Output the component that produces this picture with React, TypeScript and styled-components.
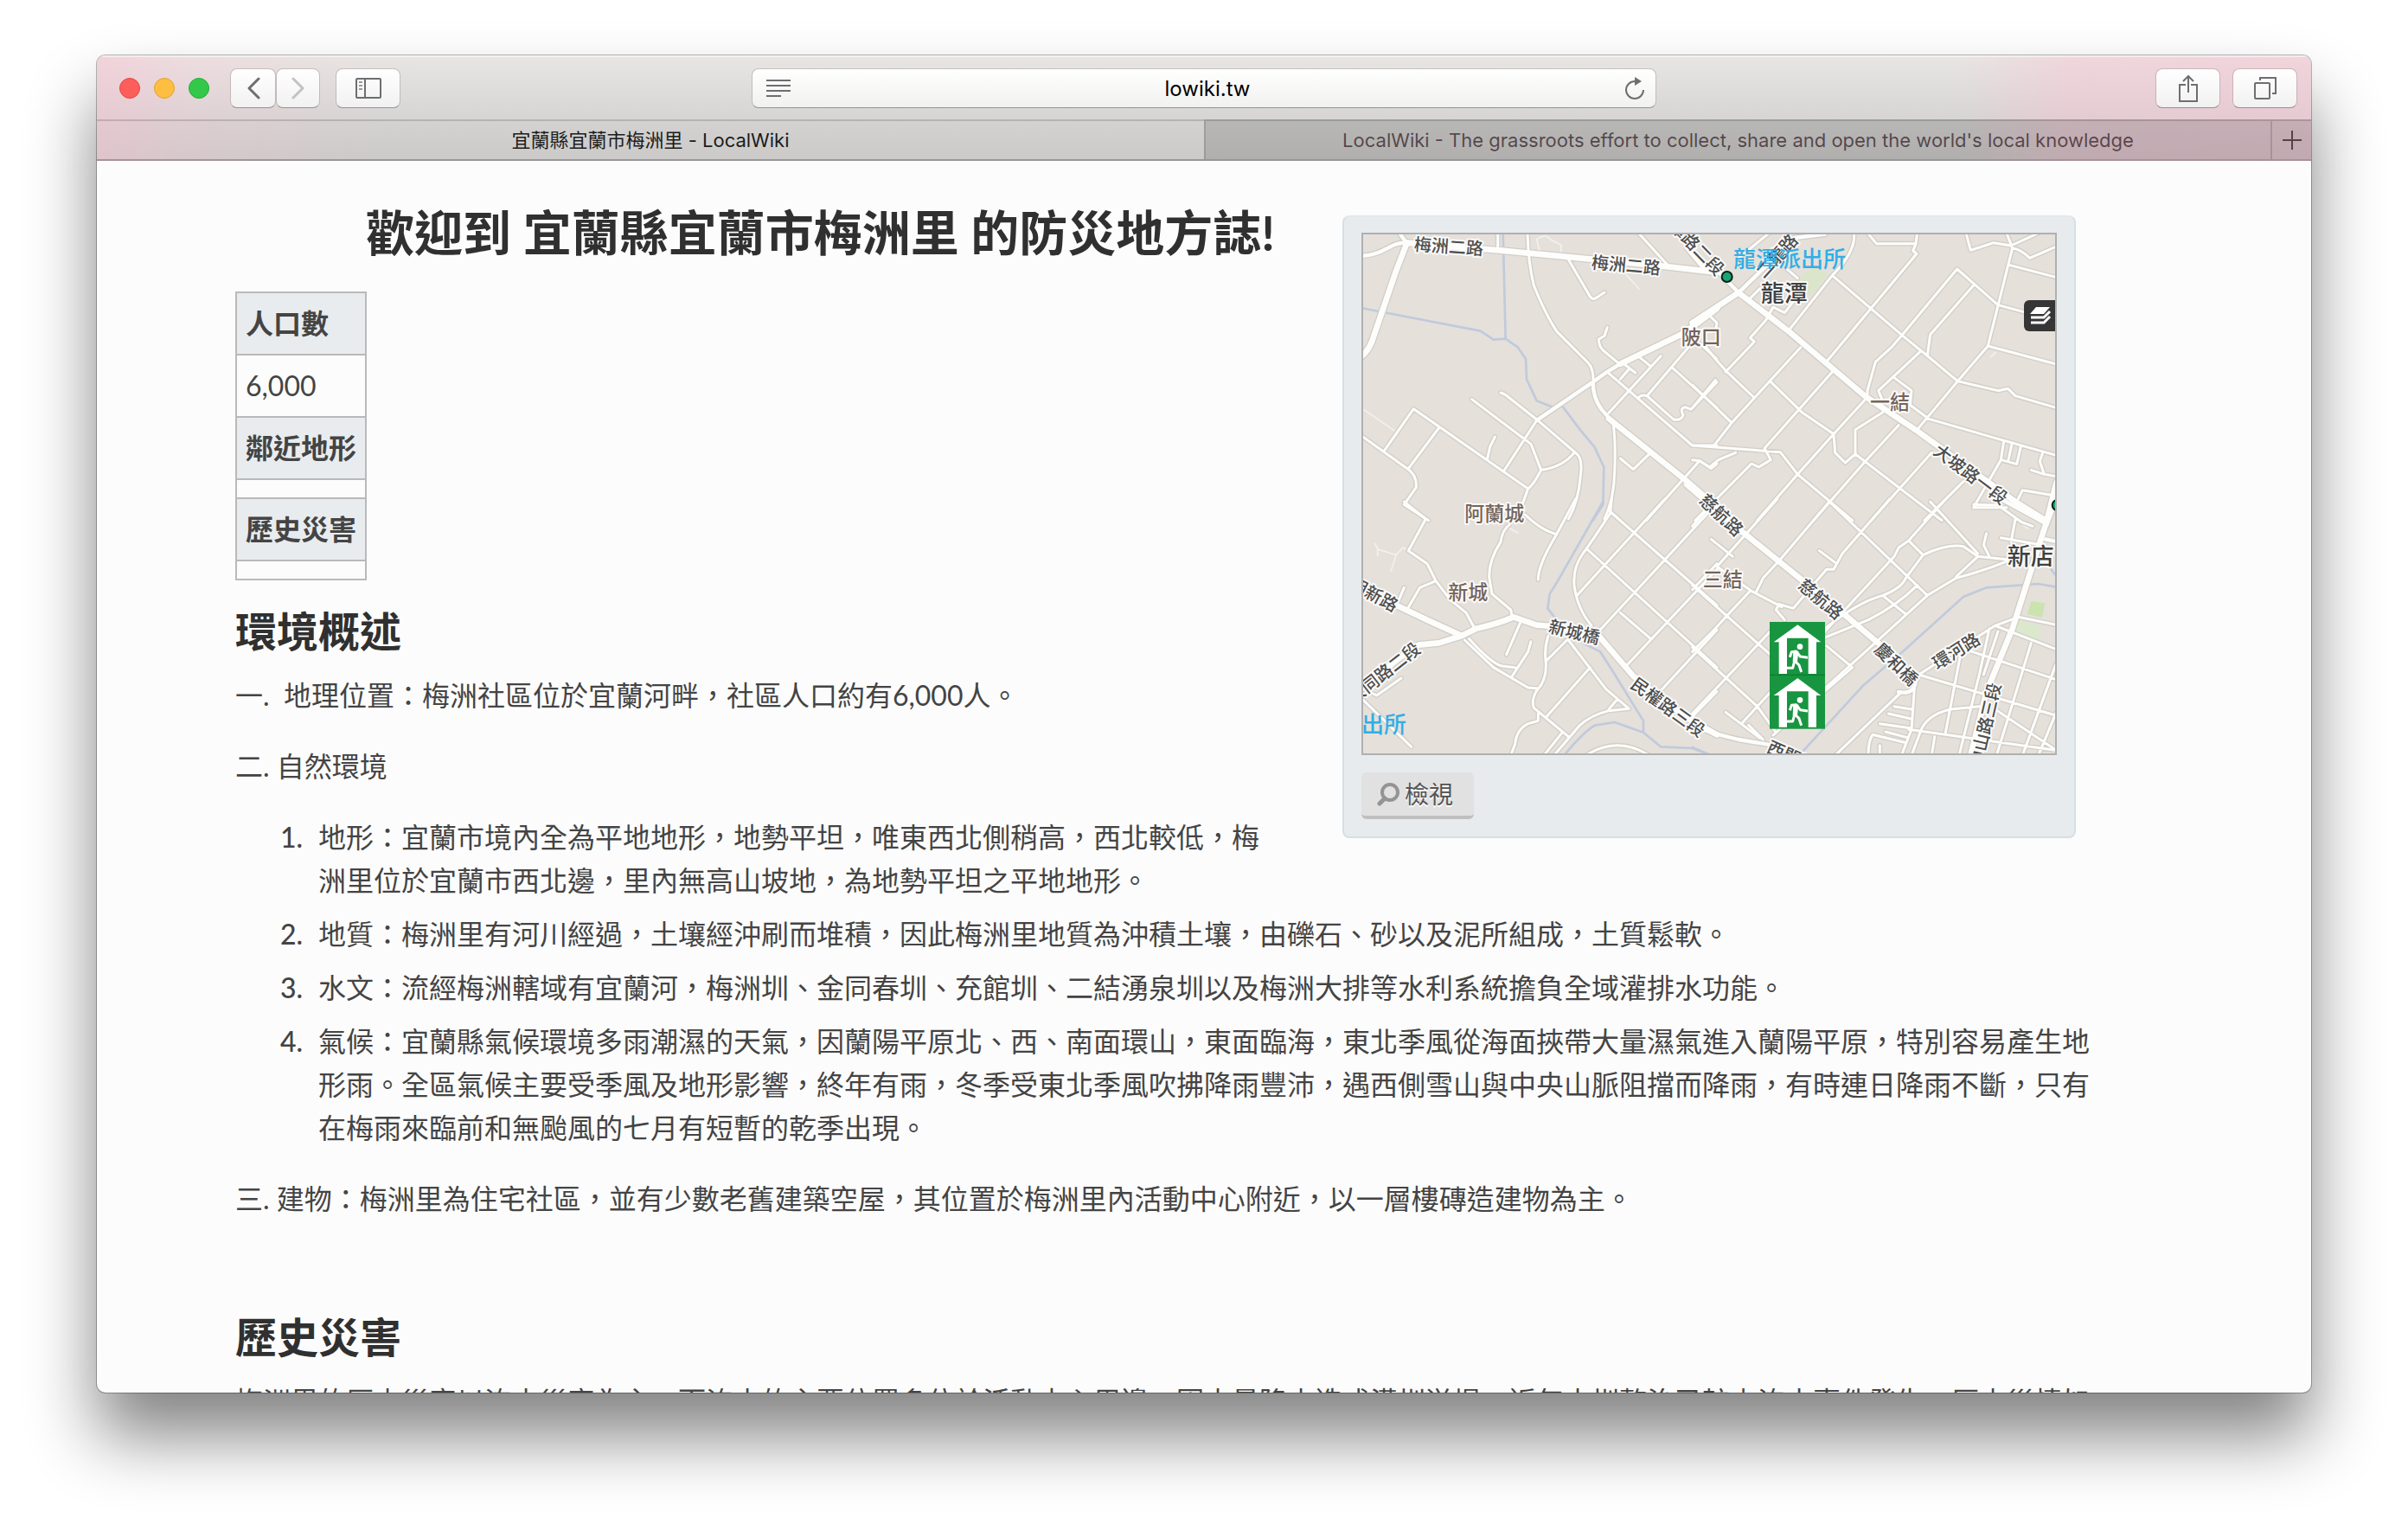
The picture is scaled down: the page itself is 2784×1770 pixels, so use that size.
import React from "react";
import styled, { createGlobalStyle } from "styled-components";

const UI_FONT = `Inter, "Noto Sans CJK TC", sans-serif`;
const TEXT_FONT = `Lato, "Noto Sans CJK TC", sans-serif`;

const GlobalStyle = createGlobalStyle`
  *, *::before, *::after { box-sizing: border-box; }
  body { margin: 0; background: #fff; font-family: ${TEXT_FONT}; }
  button, input { font: inherit; color: inherit; }
`;

/* ---------- browser window ---------- */

const Desktop = styled.div`
  height: 100vh;
  padding: 64px 112px 160px;
`;

const BrowserWindow = styled.div`
  display: flex;
  flex-direction: column;
  height: 100%;
  overflow: hidden;
  border-radius: 10px;
  background: #fcfcfc;
  box-shadow: 0 0 0 1px rgba(0, 0, 0, 0.28), 0 50px 80px rgba(0, 0, 0, 0.49);
`;

const Chrome = styled.header`
  flex: none;
  font-family: ${UI_FONT};
  background:
    linear-gradient(100deg, rgba(255, 185, 205, 0.42) 0, rgba(255, 190, 210, 0.22) 110px, rgba(255, 190, 210, 0) 360px),
    linear-gradient(90deg, rgba(255, 185, 208, 0) 84%, rgba(255, 185, 208, 0.34) 89%, rgba(255, 185, 208, 0.4) 100%),
    linear-gradient(180deg, #e8e6e4 0, #d6d5d4 74px, #d3d2d1 76px, #cbcac9 100%);
`;

const Toolbar = styled.div`
  display: grid;
  grid-template-columns: 1fr minmax(300px, 1046px) 1fr;
  align-items: center;
  height: 74px;
  padding: 0 16px;
  column-gap: 12px;
  border-top: 2px solid rgba(255, 255, 255, 0.5);
`;

const ToolGroup = styled.div<{ $end?: boolean; $gap: number }>`
  display: flex;
  align-items: center;
  gap: ${(p) => p.$gap}px;
  justify-content: ${(p) => (p.$end ? "flex-end" : "flex-start")};
`;

const Lights = styled.div`
  display: flex;
  gap: 16px;
  padding: 0 6px 0 10px;
`;

const Light = styled.button<{ $color: string; $edge: string }>`
  width: 24px;
  height: 24px;
  padding: 0;
  border: 1px solid ${(p) => p.$edge};
  border-radius: 50%;
  background: ${(p) => p.$color};
`;

const ToolButton = styled.button<{ $width: number }>`
  display: flex;
  align-items: center;
  justify-content: center;
  width: ${(p) => p.$width}px;
  height: 46px;
  padding: 0;
  border: 1px solid rgba(0, 0, 0, 0.14);
  border-bottom-color: rgba(0, 0, 0, 0.32);
  border-radius: 8px;
  background: linear-gradient(#fff, #f2f1f1);
  background-clip: padding-box;
  color: #6e6e6e;
`;

const AddressBar = styled.form`
  display: flex;
  align-items: center;
  height: 46px;
  padding: 0 12px 0 16px;
  border: 1px solid rgba(0, 0, 0, 0.14);
  border-bottom-color: rgba(0, 0, 0, 0.32);
  border-radius: 8px;
  background: linear-gradient(#fff, #f1f1f0);
  background-clip: padding-box;
  color: #6e6e6e;
`;

const PlainButton = styled.button`
  display: flex;
  padding: 0;
  border: 0;
  background: none;
`;

const AddressInput = styled.input`
  flex: 1;
  min-width: 0;
  padding: 2px 0 0;
  border: 0;
  outline: 0;
  background: none;
  color: #000;
  font-size: 24px;
  line-height: 32px;
  text-align: center;
`;

const TabBar = styled.nav`
  display: grid;
  grid-template-columns: 1fr 1fr;
  height: 48px;
`;

const TabCell = styled.div<{ $active?: boolean }>`
  display: flex;
  min-width: 0;
  border-top: 2px solid rgba(0, 0, 0, 0.15);
  border-bottom: 2px solid rgba(0, 0, 0, ${(p) => (p.$active ? 0.25 : 0.14)});
  border-left: ${(p) => (p.$active ? "0" : "2px solid rgba(0, 0, 0, 0.12)")};
  background: ${(p) => (p.$active ? "none" : "rgba(0, 0, 0, 0.13)")};
`;

const Tab = styled.a<{ $active?: boolean }>`
  flex: 1;
  min-width: 0;
  overflow: hidden;
  color: ${(p) => (p.$active ? "#1c1c1c" : "rgba(20, 0, 6, 0.62)")};
  font-size: 22px;
  line-height: 44px;
  text-align: center;
  text-decoration: none;
  text-overflow: ellipsis;
  white-space: nowrap;
`;

const NewTab = styled.button`
  display: flex;
  align-items: center;
  justify-content: center;
  width: 47px;
  padding: 0;
  border: 0;
  border-left: 2px solid rgba(0, 0, 0, 0.14);
  background: none;
  color: rgba(20, 0, 6, 0.62);
`;

/* ---------- article ---------- */

const Page = styled.main`
  flex: 1;
  min-height: 0;
  overflow: hidden;
  padding: 49px 240px 0 160px;
  color: #444;
  font-size: 32px;
  line-height: 50px;
`;

const Title = styled.h1`
  margin: 0 0 34px;
  color: #303030;
  font-size: 56px;
  line-height: 68px;
  text-align: right;
`;

const Heading = styled.h2<{ $far?: boolean }>`
  margin: ${(p) => (p.$far ? 106 : 30)}px 0 20px;
  color: #303030;
  font-size: 48px;
  line-height: 58px;
`;

const Facts = styled.table`
  border-collapse: collapse;

  th, td {
    height: 22px;
    padding: 10px;
    border: 2px solid #b9b9b9;
    text-align: left;
  }
  th { background: #e8ecef; }
  td:empty { padding: 0; }
`;

const Paragraph = styled.p`
  margin: 0 0 32px;
`;

const Points = styled.ol`
  margin: 0 0 32px;
  padding: 0;
  list-style: none;
  counter-reset: point;
`;

const Point = styled.li`
  padding-left: 96px;
  counter-increment: point;

  & + & { margin-top: 12px; }

  &::before {
    content: counter(point) ".";
    display: inline-block;
    width: 78px;
    margin: 0 18px 0 -96px;
    font-weight: 500;
    text-align: right;
  }
`;

/* ---------- map card ---------- */

const MapCard = styled.aside`
  float: right;
  width: 848px;
  max-width: 60%;
  margin: 14px 32px 32px 78px;
  padding: 18px 20px 20px;
  border: 2px solid #d6dfe4;
  border-top-color: #e2e8eb;
  border-radius: 8px;
  background: #e7ebee;
`;

const MapFrame = styled.div`
  position: relative;
  margin-bottom: 20px;
  border: 2px solid #b0b0b0;

  > svg { display: block; width: 100%; height: auto; }
`;

const LayersButton = styled.button`
  position: absolute;
  top: 76px;
  right: 0;
  display: flex;
  width: 36px;
  height: 36px;
  padding: 0;
  border: 0;
  border-radius: 6px 0 0 6px;
  background: #363636;
`;

const ViewButton = styled.a`
  display: inline-flex;
  align-items: center;
  gap: 6px;
  height: 54px;
  padding: 0 24px 0 18px;
  border-bottom: 4px solid #bfbfbf;
  border-radius: 6px;
  background: #e1e1e1;
  color: #555;
  font-size: 28px;
  line-height: 50px;
  text-decoration: none;
  text-shadow: 0 2px 0 #fff;
  vertical-align: top;
`;

/* The map is drawn as four tiles; every tile has its own origin and is three units to the pixel. */
type TileId = "nw" | "ne" | "sw" | "se";
const TILE: Record<TileId, [number, number]> = {
  nw: [-36, -41],
  ne: [384, -41],
  sw: [-36, 309],
  se: [384, 309],
};

type Lines = { major: string[]; mid: string[]; minor: string[]; faint: string[]; water: string[] };

const ROADS: Record<TileId, Lines> = {
  nw: {
    major: [
      "M258 152L580 178L860 205L1140 232L1330 254",
      "M260 152L222 250L140 490Q128 525 100 548",
      "M960 762L1220 970L1330 1065",
      "M1000 572L1215 468Q1270 430 1335 380",
    ],
    mid: [
      "M100 198Q150 195 190 172T258 152L232 115",
      "M905 635Q905 690 935 730L975 775",
      "M710 768L905 635Q950 600 1000 572",
    ],
    minor: [
      "M575 115V175",
      "M678 115Q680 220 700 300Q740 400 780 460L890 570Q908 590 906 640",
      "M595 945L710 768",
      "M820 210L890 330Q902 355 918 342L945 324",
      "M1060 115Q1110 170 1165 230",
      "M955 445L945 475L925 487Q925 510 940 525L1000 575",
      "M100 820L265 938Q295 960 292 1000L250 1060L335 1115",
      "M180 875L283 728L680 1005",
      "M265 935L370 795",
      "M538 905L548 860L565 825",
      "M485 695L690 850L725 940Q800 930 840 880",
      "M585 672L600 678L710 765L850 885Q870 905 862 960Q855 1050 820 1110",
      "M725 940Q700 990 680 1005L660 1060",
      "M975 775Q985 850 980 950Q978 1040 945 1110",
      "M960 605L1250 855H1335",
      "M960 742L1140 545",
      "M1065 548L1105 580",
      "M1010 570L1052 603",
      "M1030 590L1000 625",
      "M1062 690Q1075 675 1095 685L1185 765Q1210 770 1218 750Q1205 725 1225 722L1245 730L1335 635",
      "M1095 680L1240 510",
      "M1180 585L1335 725",
      "M1280 505L1335 555",
      "M1000 900L1045 938L1105 880",
      "M1090 1115L1275 908L1315 935L1335 918",
      "M965 1085L1000 1115",
    ],
    faint: ["M110 730L215 803", "M1020 262L1065 312", "M795 190V160L760 142Q740 118 710 140L720 180"],
    water: [
      "M100 378L515 458L560 488L602 485L645 515L672 555L675 625L710 700L760 720L800 720L860 800L910 860L943 930L940 1060L905 1115",
      "M593 115L602 485",
    ],
  },
  ne: {
    major: [
      "M150 325L325 460L590 685L770 805L1110 1050L1215 1115",
      "M-10 430L150 325",
      "M1252 985L1220 1115",
    ],
    mid: ["M-10 245L85 258L150 325L345 135L450 122", "M-30 170L20 230L110 270", "M150 325L270 210L330 150"],
    minor: [
      "M325 455L475 265Q560 180 550 115",
      "M598 118L628 155H765L770 115",
      "M765 155L755 180L768 190L455 565",
      "M938 115L955 178L1035 152L1095 162L1252 90",
      "M1078 115L1100 170L1015 510L910 632L770 800",
      "M1100 170Q1130 175 1160 205L1252 165",
      "M1092 230L1252 272",
      "M475 265L720 475L800 540L910 632L1050 665L1085 658L1110 683L1252 724",
      "M908 243L715 475L680 515L625 565L597 665V690",
      "M908 243L1050 368L1252 422",
      "M965 300L815 470L805 545",
      "M1015 510L1252 573",
      "M50 405L75 430L70 460",
      "M245 420L190 482L205 495L105 600",
      "M245 420L270 375L310 395L360 330",
      "M160 110L260 115L150 205",
      "M185 350L225 310",
      "M320 245L355 275",
      "M30 505L70 555L105 595L205 690",
      "M365 515L125 778L65 855",
      "M-10 725L70 628",
      "M-10 645L125 775",
      "M475 600L240 865L262 905L220 930L195 918L0 1115",
      "M262 635L370 740L480 815L485 880L520 915L555 885L855 1115",
      "M-10 855L295 878L355 955L545 1115",
      "M590 695L480 815",
      "M650 740L555 800V885",
      "M780 530L635 665L650 700",
      "M690 620L750 665L745 715L800 755",
      "M705 785L590 910L410 1115",
      "M480 815L355 955L215 1115",
      "M820 880L610 1115",
      "M800 760L1060 835L1252 889",
      "M1070 840L1060 905L965 1070L1080 1070",
      "M1062 905L1115 920L1130 855",
      "M1098 850L1085 910",
      "M1205 880L1195 910L1210 955L1252 962M1165 940L1210 955",
      "M1252 1030L1135 1010L1110 1060",
      "M-10 905L15 908L50 930L80 905L140 880",
      "M930 980L825 1085L795 1115",
    ],
    faint: ["M1025 548L1042 532"],
    water: [],
  },
  sw: {
    major: [
      "M225 360L330 410L450 465L500 440Q570 425 630 400L710 428L760 432L925 465L1045 605L1240 755L1335 808",
      "M450 465L370 490L300 497L230 545L100 650",
    ],
    mid: ["M225 360L100 290"],
    minor: [
      "M250 0L325 60L265 170L330 215L360 275L410 340L465 385L495 440",
      "M360 275L305 298L260 375",
      "M250 298L230 345",
      "M615 80Q590 100 585 140Q545 200 545 260L555 320L620 375L625 400",
      "M670 45Q720 95 775 112",
      "M845 -10L775 120Q715 220 715 270",
      "M970 -10L965 40Q900 140 870 180Q835 230 840 290Q850 370 900 430",
      "M965 35L1335 360",
      "M885 165L1335 575",
      "M850 325L1155 -10",
      "M930 445L1335 5",
      "M1020 570L1335 235",
      "M1145 650L1335 445",
      "M1250 745L1335 658",
      "M1000 385L1105 475",
      "M655 415L605 530",
      "M690 485L680 520L625 605",
      "M460 480L560 575L680 645L715 648",
      "M475 475Q550 560 590 570L635 575",
      "M750 465Q735 510 742 560Q745 620 710 655Q690 690 700 715L820 815",
      "M715 735V760L680 770Q640 790 635 840L620 880",
      "M815 480L745 550",
      "M820 480L950 650L1030 718L960 725Q900 740 860 775L770 880",
      "M990 685L960 720",
      "M895 575L745 745",
      "M795 805L735 880",
      "M880 880Q990 810 1100 880",
      "M100 680L275 850",
      "M130 660L155 672L240 612",
    ],
    faint: ["M148 145L160 165L222 185L205 240M158 188V165M222 185L245 160L262 165", "M615 92L645 108"],
    water: [
      "M940 0L780 280L755 320L748 370L775 405",
      "M870 490L930 520L975 590L1080 760L1080 800L1140 850L1250 855L1335 888",
      "M805 880Q880 790 915 775L980 765L1080 800",
    ],
  },
  se: {
    major: ["M-30 -60L170 110L510 385L640 495L765 615", "M1250 -10L1210 95L1100 440L1010 660L955 880"],
    mid: ["M1050 -15L1220 78", "M-15 775Q60 805 150 825L300 850", "M1215 130L1252 138", "M765 612Q765 672 705 660"],
    minor: [
      "M465 0L295 200L235 265L212 312",
      "M190 310L110 395L60 450L-10 520",
      "M285 -10L75 225L195 310L300 365",
      "M75 215L-10 305",
      "M75 -10L-10 85",
      "M675 -10L510 180L480 235L455 235L340 370L290 355L280 375L310 410",
      "M865 -5L740 135L705 160L690 190L385 520",
      "M430 170L490 215",
      "M55 130L130 190",
      "M465 0L805 325",
      "M740 135L790 185L730 265Q715 300 650 325Q560 350 450 440",
      "M790 185Q870 145 930 155L980 190L1080 200",
      "M980 190L905 260",
      "M1085 205Q1000 240 905 265L805 325L640 475L270 810",
      "M770 290Q700 360 600 410L440 475",
      "M650 325L730 390",
      "M-10 290L260 530",
      "M-10 505L215 710L280 800",
      "M-10 735L260 450",
      "M160 770L275 645",
      "M105 730L225 820M185 775L235 825",
      "M455 500L545 575L440 665",
      "M485 880L710 665",
      "M1010 110L1000 150L1020 190",
      "M815 0L980 180",
      "M965 10L1050 12L1130 70L1170 85",
      "M1110 60L1095 140M1060 125L1200 150",
      "M1120 400L1252 427",
      "M775 600L1040 430L1120 400",
      "M1040 430L1252 512",
      "M930 510L1252 617",
      "M775 600L1252 742",
      "M1040 720L1252 862",
      "M740 790L1252 862",
      "M762 620L750 790L715 880",
      "M1020 440L985 600L915 880",
      "M1050 450L1000 600",
      "M920 530L868 800",
      "M1165 490L1045 880",
      "M1252 560L1135 880",
      "M1252 730L1190 880",
      "M985 710L885 720Q800 740 780 800L750 880",
      "M830 815L820 880",
      "M690 710L750 720M670 735L745 752M640 770L745 785",
      "M600 880Q600 830 615 808L725 835M660 798L735 818",
      "M640 880V845",
    ],
    faint: ["M1130 75L1150 92L1175 82"],
    water: ["M360 880L580 640L720 520L930 330L1010 298L1190 285L1252 296", "M1235 235L1252 258", "M-10 852L60 882"],
  },
};

const LINE_STYLE: { kind: keyof Lines; width: number }[] = [
  { kind: "minor", width: 9 },
  { kind: "mid", width: 13 },
  { kind: "major", width: 20 },
];

type Tone = "road" | "village" | "town" | "police";
const TONE: Record<Tone, { size: number; fill: string; weight: number }> = {
  road: { size: 20, fill: "#4e4e4e", weight: 500 },
  village: { size: 23, fill: "#75645a", weight: 500 },
  town: { size: 27, fill: "#404040", weight: 500 },
  police: { size: 26, fill: "#31aee6", weight: 500 },
};

const LABELS: { tile: TileId; x: number; y: number; turn?: number; tone: Tone; text: string }[] = [
  { tile: "nw", x: 405, y: 165, turn: 4, tone: "road", text: "梅洲二路" },
  { tile: "nw", x: 1020, y: 230, turn: 5, tone: "road", text: "梅洲二路" },
  { tile: "ne", x: 5, y: 168, turn: 46, tone: "road", text: "潭路二段" },
  { tile: "ne", x: 283, y: 198, turn: -48, tone: "road", text: "二龍路" },
  { tile: "ne", x: 955, y: 955, turn: 37, tone: "road", text: "大坡路一段" },
  { tile: "se", x: 90, y: 46, turn: 43, tone: "road", text: "慈航路" },
  { tile: "se", x: 435, y: 338, turn: 40, tone: "road", text: "慈航路" },
  { tile: "se", x: 697, y: 564, turn: 44, tone: "road", text: "慶和橋" },
  { tile: "se", x: 905, y: 518, turn: -32, tone: "road", text: "環河路" },
  { tile: "se", x: 1006, y: 776, turn: -77, tone: "road", text: "中山路三段" },
  { tile: "se", x: 335, y: 884, turn: 24, tone: "road", text: "西門路" },
  { tile: "sw", x: 145, y: 322, turn: 28, tone: "road", text: "朝新路" },
  { tile: "sw", x: 180, y: 594, turn: -38, tone: "road", text: "大同路二段" },
  { tile: "sw", x: 840, y: 452, turn: 14, tone: "road", text: "新城橋" },
  { tile: "sw", x: 1165, y: 713, turn: 36, tone: "road", text: "民權路三段" },
  { tile: "ne", x: 20, y: 478, tone: "village", text: "陂口" },
  { tile: "ne", x: 675, y: 705, tone: "village", text: "一結" },
  { tile: "se", x: 95, y: 270, tone: "village", text: "三結" },
  { tile: "sw", x: 563, y: 42, tone: "village", text: "阿蘭城" },
  { tile: "sw", x: 472, y: 313, tone: "village", text: "新城" },
  { tile: "ne", x: 308, y: 327, tone: "town", text: "龍潭" },
  { tile: "se", x: 1163, y: 190, tone: "town", text: "新店" },
  { tile: "ne", x: 327, y: 208, tone: "police", text: "龍潭派出所" },
  { tile: "sw", x: 141, y: 772, tone: "police", text: "派出所" },
];

const TILE_IDS = Object.keys(TILE) as TileId[];
const tileTransform = (id: TileId) => `translate(${TILE[id][0]} ${TILE[id][1]}) scale(0.33333)`;

function Strokes({ kind, color, width }: { kind: keyof Lines; color: string; width: number }) {
  return (
    <>
      {TILE_IDS.map((id) => (
        <path key={id} transform={tileTransform(id)} d={ROADS[id][kind].join("")} stroke={color} strokeWidth={width} />
      ))}
    </>
  );
}

function Shelter({ y }: { y: number }) {
  return (
    <g transform={`translate(258 ${y})`}>
      <rect width="192" height="186" fill="#189540" />
      <path d="M97 10L178 70H162V180H134V56H60V180H32V70H14Z" fill="#fff" />
      <circle cx="105" cy="86" r="10" fill="#fff" />
      <path
        d="M70 122L76 104L92 102L106 120L132 124M92 104L86 134L102 150L110 174M86 136L80 160H58"
        fill="none"
        stroke="#fff"
        strokeWidth="9"
        strokeLinejoin="round"
      />
      <path d="M82 100L100 102L96 138H80Z" fill="#fff" />
    </g>
  );
}

function StreetMap() {
  return (
    <svg viewBox="0 0 800 600" role="img" aria-label="梅洲里地圖">
      <rect width="800" height="600" fill="#e5e0da" />
      <g transform={tileTransform("ne")} fill="#dbe5c9">
        <path d="M412 235L460 262L400 337L352 282Z" />
      </g>
      <g transform={tileTransform("se")}>
        <path d="M1165 345L1213 352L1203 402L1152 390Z" fill="#cbe3ae" />
        <path d="M1118 410L1200 430L1190 480L1110 460Z" fill="#dbe8cc" />
        <path d="M1248 575L1238 608L1252 612Z" fill="#cbe3ae" />
      </g>
      <g fill="none" strokeLinecap="round" strokeLinejoin="round">
        <Strokes kind="water" color="#c0cadc" width={8} />
        <Strokes kind="faint" color="#f3f1ee" width={5} />
        {LINE_STYLE.map((s) => (
          <Strokes key={s.kind} kind={s.kind} color="#d2cec7" width={s.width + 8} />
        ))}
        {LINE_STYLE.map((s) => (
          <Strokes key={s.kind} kind={s.kind} color="#fdfdfc" width={s.width} />
        ))}
      </g>
      <g
        fontFamily={`"Noto Sans CJK TC", sans-serif`}
        textAnchor="middle"
        paintOrder="stroke"
        strokeLinejoin="round"
      >
        {LABELS.map((l, i) => {
          const x = TILE[l.tile][0] + l.x / 3;
          const y = TILE[l.tile][1] + l.y / 3;
          const tone = TONE[l.tone];
          return (
            <text
              key={i}
              transform={`translate(${x} ${y}) rotate(${l.turn || 0})`}
              dy="0.36em"
              fontSize={tone.size}
              fontWeight={tone.weight}
              fill={tone.fill}
              stroke={l.tone === "police" ? "none" : "rgba(255,255,255,0.85)"}
              strokeWidth="4"
            >
              {l.text}
            </text>
          );
        })}
      </g>
      <g transform={tileTransform("ne")} fill="#18a474" stroke="#0b1f18" strokeWidth="6">
        <circle cx="110" cy="270" r="18" />
        <circle cx="1256" cy="1062" r="18" />
      </g>
      <g transform={tileTransform("se")}>
        <Shelter y={417} />
        <Shelter y={602} />
        <path d="M258 601H450" stroke="#117a32" strokeWidth="4" />
      </g>
    </svg>
  );
}

/* ---------- toolbar icons ---------- */

const Chevron = ({ flip }: { flip?: boolean }) => (
  <svg width="16" height="26" viewBox="0 0 16 26" fill="none" stroke={flip ? "#c2c2c2" : "#6e6e6e"} strokeWidth="3" strokeLinecap="round" strokeLinejoin="round">
    <path d={flip ? "M2 2L13 13L2 24" : "M14 2L3 13L14 24"} />
  </svg>
);

const SidebarIcon = () => (
  <svg width="30" height="24" viewBox="0 0 30 24" fill="none" stroke="currentColor" strokeWidth="2">
    <rect x="1" y="1" width="28" height="22" rx="1" />
    <path d="M11 1V23" />
    <path d="M4 5H8M4 9H8M4 13H8" stroke="#9a9a9a" />
  </svg>
);

const ReaderIcon = () => (
  <svg width="28" height="20" viewBox="0 0 28 20" stroke="currentColor" strokeWidth="2">
    <path d="M0 1H28M0 7H28M0 13H28M0 19H17" />
  </svg>
);

const ReloadIcon = () => (
  <svg width="24" height="28" viewBox="0 0 24 28" fill="none" stroke="currentColor" strokeWidth="2">
    <path d="M12 6A10 10 0 1 0 22 16" />
    <path d="M12 1L20 6L12 11Z" fill="currentColor" stroke="none" />
  </svg>
);

const ShareIcon = () => (
  <svg width="24" height="32" viewBox="0 0 24 32" fill="none" stroke="currentColor" strokeWidth="2">
    <path d="M9 12H2V31H22V12H15M12 21V2M6 8L12 2L18 8" />
  </svg>
);

const TabsIcon = () => (
  <svg width="26" height="26" viewBox="0 0 26 26" fill="none" stroke="currentColor" strokeWidth="2">
    <rect x="1" y="7" width="17" height="18" rx="1" />
    <path d="M7 4V1H25V19H21" />
  </svg>
);

const PlusIcon = () => (
  <svg width="22" height="22" viewBox="0 0 22 22" stroke="currentColor" strokeWidth="2">
    <path d="M11 0V22M0 11H22" />
  </svg>
);

const SearchIcon = () => (
  <svg width="26" height="28" viewBox="0 0 26 28" fill="none" stroke="#949494">
    <circle cx="15" cy="12" r="9" strokeWidth="4" />
    <path d="M9 19L3 25" strokeWidth="5" strokeLinecap="round" />
  </svg>
);

const LayersIcon = () => (
  <svg width="36" height="36" viewBox="0 0 36 36">
    <path d="M14 8H30L23 16H7Z" fill="#fff" />
    <path d="M8 20H23L30 13M8 26H23L30 19" fill="none" stroke="#fff" strokeWidth="3" />
  </svg>
);

export default function App() {
  return (
    <Desktop lang="zh-Hant-TW">
      <GlobalStyle />
      <BrowserWindow>
        <Chrome>
          <Toolbar>
            <ToolGroup $gap={18}>
              <Lights>
                <Light $color="#fc5f5b" $edge="#e2463f" aria-label="關閉" />
                <Light $color="#fdbe41" $edge="#e1a12f" aria-label="縮到最小" />
                <Light $color="#34c84a" $edge="#24ab35" aria-label="全螢幕" />
              </Lights>
              <ToolGroup $gap={0}>
                <ToolButton $width={53} aria-label="上一頁"><Chevron /></ToolButton>
                <ToolButton $width={51} aria-label="下一頁"><Chevron flip /></ToolButton>
              </ToolGroup>
              <ToolButton $width={75} aria-label="側邊欄"><SidebarIcon /></ToolButton>
            </ToolGroup>
            <AddressBar onSubmit={(e) => e.preventDefault()}>
              <PlainButton type="button" aria-label="閱讀器"><ReaderIcon /></PlainButton>
              <AddressInput aria-label="網址" defaultValue="lowiki.tw" />
              <PlainButton type="button" aria-label="重新載入"><ReloadIcon /></PlainButton>
            </AddressBar>
            <ToolGroup $end $gap={14}>
              <ToolButton $width={75} aria-label="分享"><ShareIcon /></ToolButton>
              <ToolButton $width={75} aria-label="顯示所有標籤頁"><TabsIcon /></ToolButton>
            </ToolGroup>
          </Toolbar>
          <TabBar>
            <TabCell $active>
              <Tab $active href="#article">宜蘭縣宜蘭市梅洲里 - LocalWiki</Tab>
            </TabCell>
            <TabCell>
              <Tab href="#localwiki">
                LocalWiki - The grassroots effort to collect, share and open the world's local knowledge
              </Tab>
              <NewTab aria-label="新增標籤頁"><PlusIcon /></NewTab>
            </TabCell>
          </TabBar>
        </Chrome>

        <Page id="article">
          <MapCard>
            <MapFrame>
              <StreetMap />
              <LayersButton aria-label="圖層"><LayersIcon /></LayersButton>
            </MapFrame>
            <ViewButton href="#map"><SearchIcon />檢視</ViewButton>
          </MapCard>

          <Title>歡迎到 宜蘭縣宜蘭市梅洲里 的防災地方誌!</Title>

          <Facts>
            <tbody>
              <tr><th scope="row">人口數</th></tr>
              <tr><td>6,000</td></tr>
              <tr><th scope="row">鄰近地形</th></tr>
              <tr><td /></tr>
              <tr><th scope="row">歷史災害</th></tr>
              <tr><td /></tr>
            </tbody>
          </Facts>

          <Heading>環境概述</Heading>
          <Paragraph>一.&nbsp; 地理位置：梅洲社區位於宜蘭河畔，社區人口約有6,000人。</Paragraph>
          <Paragraph>二. 自然環境</Paragraph>
          <Points>
            <Point>地形：宜蘭市境內全為平地地形，地勢平坦，唯東西北側稍高，西北較低，梅洲里位於宜蘭市西北邊，里內無高山坡地，為地勢平坦之平地地形。</Point>
            <Point>地質：梅洲里有河川經過，土壤經沖刷而堆積，因此梅洲里地質為沖積土壤，由礫石、砂以及泥所組成，土質鬆軟。</Point>
            <Point>水文：流經梅洲轄域有宜蘭河，梅洲圳、金同春圳、充館圳、二結湧泉圳以及梅洲大排等水利系統擔負全域灌排水功能。</Point>
            <Point>氣候：宜蘭縣氣候環境多雨潮濕的天氣，因蘭陽平原北、西、南面環山，東面臨海，東北季風從海面挾帶大量濕氣進入蘭陽平原，特別容易產生地形雨。全區氣候主要受季風及地形影響，終年有雨，冬季受東北季風吹拂降雨豐沛，遇西側雪山與中央山脈阻擋而降雨，有時連日降雨不斷，只有在梅雨來臨前和無颱風的七月有短暫的乾季出現。</Point>
          </Points>
          <Paragraph>三. 建物：梅洲里為住宅社區，並有少數老舊建築空屋，其位置於梅洲里內活動中心附近，以一層樓磚造建物為主。</Paragraph>

          <Heading $far>歷史災害</Heading>
          <Paragraph>梅洲里的歷史災害以淹水災害為主，而淹水的主要位置多位於活動中心周邊，因大量降水造成溝圳溢堤，近年大圳整治已較少淹水事件發生，歷史災情如</Paragraph>
        </Page>
      </BrowserWindow>
    </Desktop>
  );
}
